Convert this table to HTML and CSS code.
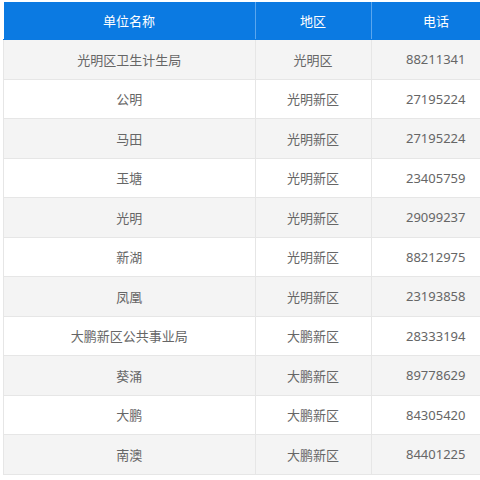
FILE: index.html
```html
<!DOCTYPE html>
<html lang="zh-CN">
<head>
<meta charset="utf-8">
<link rel="stylesheet" href="styles.css">
</head>
<body>
<table class="tbl">
  <thead>
    <tr><th class="c1">单位名称</th><th class="c2">地区</th><th class="c3">电话</th></tr>
  </thead>
  <tbody>
    <tr><td>光明区卫生计生局</td><td>光明区</td><td>88211341</td></tr>
    <tr><td>公明</td><td>光明新区</td><td>27195224</td></tr>
    <tr><td>马田</td><td>光明新区</td><td>27195224</td></tr>
    <tr><td>玉塘</td><td>光明新区</td><td>23405759</td></tr>
    <tr><td>光明</td><td>光明新区</td><td>29099237</td></tr>
    <tr><td>新湖</td><td>光明新区</td><td>88212975</td></tr>
    <tr><td>凤凰</td><td>光明新区</td><td>23193858</td></tr>
    <tr><td>大鹏新区公共事业局</td><td>大鹏新区</td><td>28333194</td></tr>
    <tr><td>葵涌</td><td>大鹏新区</td><td>89778629</td></tr>
    <tr><td>大鹏</td><td>大鹏新区</td><td>84305420</td></tr>
    <tr><td>南澳</td><td>大鹏新区</td><td>84401225</td></tr>
  </tbody>
</table>
</body>
</html>
```

FILE: styles.css
```css
html, body {
  margin: 0;
  padding: 0;
  background: #ffffff;
  overflow: hidden;
}
body {
  padding: 2px 0 0 3px;
  font-family: "Noto Sans", "Noto Sans CJK SC", sans-serif;
  font-size: 13px;
  color: #666666;
}
.tbl {
  border-collapse: collapse;
  table-layout: fixed;
  width: 495px;
}
.c1 { width: 251px; }
.c2 { width: 115px; }
.c3 { width: 129px; }
.tbl th {
  background: #0b7ae2;
  color: #ffffff;
  font-weight: normal;
  height: 37px;
  padding: 0;
  text-align: center;
  border-left: 1px solid #5aa6ee;
  border-bottom: 1px solid #0b7ae2;
}
.tbl th:first-child { border-left: none; }
.tbl td {
  height: 38.5px;
  padding: 0;
  text-align: center;
  border: 1px solid #e6e6e6;
}
.tbl tbody tr:nth-child(odd) td { background: #f4f4f4; }
.tbl tbody tr:nth-child(even) td { background: #ffffff; }
```
